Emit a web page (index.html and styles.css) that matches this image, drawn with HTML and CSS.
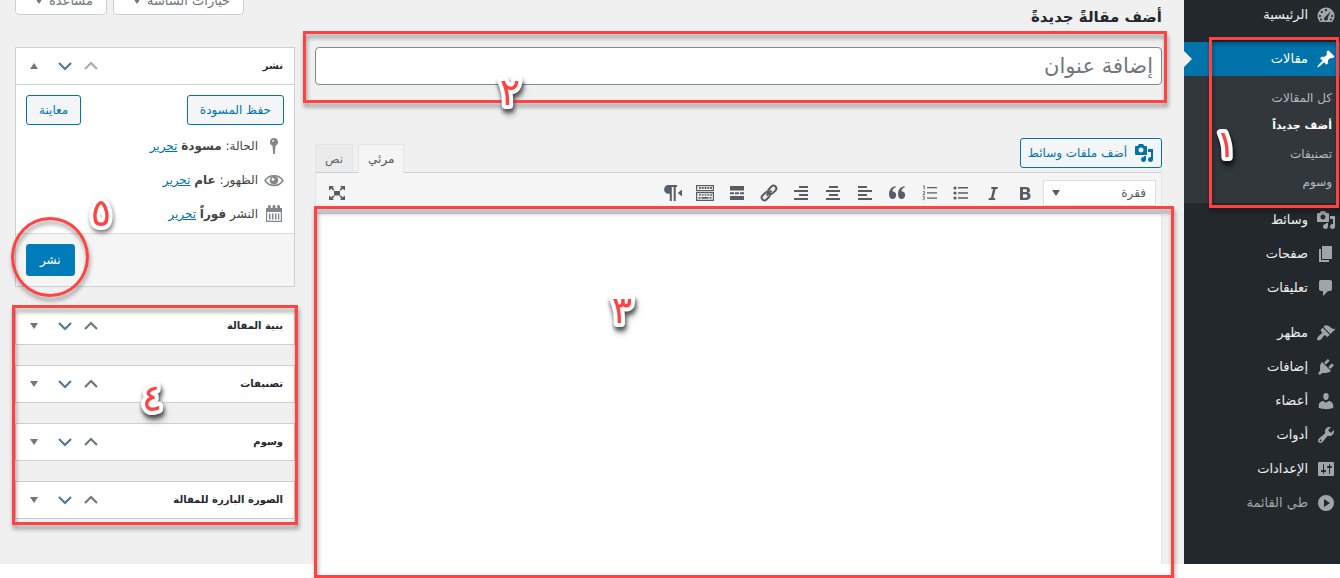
FILE: index.html
```html
<!DOCTYPE html>
<html lang="ar" dir="rtl">
<head>
  <meta charset="UTF-8">
  <meta name="viewport" content="width=device-width,initial-scale=1">
  <title>أضف مقالة جديدة</title>
  <link rel="stylesheet" href="styles.css">
</head>
<body>
  <!-- shared icons -->
  <svg class="sprite" aria-hidden="true">
    <symbol id="i-media" viewBox="0 0 20 20"><path d="M13 11V4c0-.55-.45-1-1-1h-1.67L9 1H5L3.67 3H2c-.55 0-1 .45-1 1v7c0 .55.45 1 1 1h10c.55 0 1-.45 1-1zM7 4.5c1.38 0 2.5 1.12 2.5 2.5S8.38 9.5 7 9.5 4.5 8.38 4.5 7 5.62 4.5 7 4.5zM14 6h5v10.5c0 1.38-1.12 2.5-2.5 2.5S14 17.88 14 16.5s1.12-2.5 2.5-2.5c.17 0 .34.02.5.05V9h-3V6zm-4 8.05V13h2v3.5c0 1.38-1.12 2.5-2.5 2.5S7 17.88 7 16.5 8.12 14 9.5 14c.17 0 .34.02.5.05z"/></symbol>
    <symbol id="i-up" viewBox="0 0 20 20"><path d="M4 13l6-6 6 6" fill="none" stroke="currentColor" stroke-width="2.2"/></symbol>
    <symbol id="i-down" viewBox="0 0 20 20"><path d="M4 7l6 6 6-6" fill="none" stroke="currentColor" stroke-width="2.2"/></symbol>
    <symbol id="i-tri-down" viewBox="0 0 20 20"><path d="M6 7h8l-4 6z"/></symbol>
    <symbol id="i-tri-up" viewBox="0 0 20 20"><path d="M6 13h8l-4-6z"/></symbol>
  </svg>

  <div class="wrap">
    <nav class="admin-menu">
      <a href="#" class="menu-item first">
        <svg viewBox="0 0 20 20"><path d="M3.8 17A8.6 8.6 0 1 1 16.2 17z"/><g fill="#23282d"><circle cx="10" cy="5.2" r="1.1"/><circle cx="5.8" cy="7" r="1.1"/><circle cx="4" cy="11" r="1.1"/><circle cx="16" cy="11" r="1.1"/><circle cx="5" cy="14.6" r="1"/><circle cx="15" cy="14.6" r="1"/><path d="M14.6 6.2l-2.9 6.6a1.9 1.9 0 1 1-2.2-1z"/></g></svg>
        <span>الرئيسية</span>
      </a>
      <div class="menu-group">
        <a href="#" class="menu-item current">
          <svg viewBox="0 0 20 20"><path d="M10.44 3.02l1.82-1.82 6.36 6.35-1.83 1.82c-1.05-.68-2.48-.57-3.41.36l-.75.75c-.92.93-1.04 2.35-.35 3.41l-1.83 1.82-2.41-2.41-2.8 2.79c-.42.42-3.38 2.71-3.8 2.29s1.86-3.39 2.28-3.81l2.79-2.79L4.1 9.36l1.83-1.82c1.05.69 2.48.57 3.4-.36l.75-.75c.93-.92 1.05-2.35.36-3.41z"/></svg>
          <span>مقالات</span>
        </a>
        <ul class="submenu">
          <li><a href="#">كل المقالات</a></li>
          <li><a href="#" class="active">أضف جديداً</a></li>
          <li><a href="#">تصنيفات</a></li>
          <li><a href="#">وسوم</a></li>
        </ul>
        <div class="mark mark-menu"><svg class="num" viewBox="0 0 40 50"><text x="20" y="38">١</text></svg></div>
      </div>
      <a href="#" class="menu-item"><svg><use href="#i-media"/></svg><span>وسائط</span></a>
      <a href="#" class="menu-item"><svg viewBox="0 0 20 20"><path d="M6 15V2h10v13H6zm-1 1h8v2H3V5h2v11z"/></svg><span>صفحات</span></a>
      <a href="#" class="menu-item"><svg viewBox="0 0 20 20"><path d="M5 2h9c1.1 0 2 .9 2 2v7c0 1.1-.9 2-2 2h-2l-5 5v-5H5c-1.1 0-2-.9-2-2V4c0-1.1.9-2 2-2z"/></svg><span>تعليقات</span></a>
      <a href="#" class="menu-item spaced"><svg viewBox="0 0 20 20"><path d="M14.48 11.06L7.41 3.99l1.5-1.5c.5-.56 2.3-.47 3.51.32 1.21.8 1.43 1.28 2.91 2.1 1.18.64 2.45 1.26 4.45.85zm-.71.71L6.7 4.7 4.93 6.47c-.39.39-.39 1.02 0 1.41l1.06 1.06c.39.39.39 1.03 0 1.42-.6.6-1.43 1.11-2.21 1.69-.35.26-.7.53-1.01.84C1.43 14.23.4 16.08 1.4 17.07c.99 1 2.84-.03 4.18-1.36.31-.31.58-.66.85-1.02.57-.78 1.08-1.61 1.69-2.21.39-.39 1.02-.39 1.41 0l1.06 1.06c.39.39 1.02.39 1.41 0z"/></svg><span>مظهر</span></a>
      <a href="#" class="menu-item"><svg viewBox="0 0 20 20"><path d="M13.11 4.36L9.87 7.6 8 5.73l3.24-3.24c.35-.34 1.05-.2 1.56.32.52.51.66 1.21.31 1.55zm-8 1.77l.91-1.12 9.01 9.01-1.19.84c-.71.71-2.63 1.16-3.82 1.16H6.14L4.9 17.26c-.59.59-1.54.59-2.12 0-.59-.58-.59-1.53 0-2.12l1.24-1.24v-3.88c0-1.13.4-3.19 1.09-3.89zm7.26 3.97l3.24-3.24c.34-.35 1.04-.21 1.55.31.52.51.66 1.21.31 1.55l-3.24 3.25z"/></svg><span>إضافات</span></a>
      <a href="#" class="menu-item"><svg viewBox="0 0 20 20"><path d="M10 9.25c-2.27 0-2.73-3.44-2.73-3.44C7 4.02 7.82 2 9.97 2c2.16 0 2.98 2.02 2.71 3.81 0 0-.41 3.44-2.68 3.44zm0 2.57L12.72 10c2.39 0 4.52 2.33 4.52 4.53v2.49s-3.65 1.13-7.24 1.13c-3.65 0-7.24-1.13-7.24-1.13v-2.49c0-2.25 1.94-4.48 4.47-4.48z"/></svg><span>أعضاء</span></a>
      <a href="#" class="menu-item"><svg viewBox="0 0 20 20"><path d="M16.68 9.77c-1.34 1.34-3.3 1.67-4.95.99l-5.41 6.52c-.99.99-2.59.99-3.58 0s-.99-2.59 0-3.57l6.52-5.42c-.68-1.65-.35-3.61.99-4.95 1.28-1.28 3.12-1.62 4.72-1.06l-2.89 2.89 2.82 2.82 2.86-2.87c.53 1.58.18 3.39-1.08 4.65zM3.81 16.21c.4.39 1.04.39 1.43 0 .4-.4.4-1.04 0-1.43-.39-.4-1.03-.4-1.43 0-.39.39-.39 1.03 0 1.43z"/></svg><span>أدوات</span></a>
      <a href="#" class="menu-item"><svg viewBox="0 0 20 20"><path d="M18 16V4c0-.55-.45-1-1-1H3c-.55 0-1 .45-1 1v12c0 .55.45 1 1 1h14c.55 0 1-.45 1-1zM8 11h1c.55 0 1 .45 1 1s-.45 1-1 1H8v1.5c0 .28-.22.5-.5.5s-.5-.22-.5-.5V13H6c-.55 0-1-.45-1-1s.45-1 1-1h1V5.5c0-.28.22-.5.5-.5s.5.22.5.5V11zm5-2h-1c-.55 0-1-.45-1-1s.45-1 1-1h1V5.5c0-.28.22-.5.5-.5s.5.22.5.5V7h1c.55 0 1 .45 1 1s-.45 1-1 1h-1v5.5c0 .28-.22.5-.5.5s-.5-.22-.5-.5V9z"/></svg><span>الإعدادات</span></a>
      <button type="button" class="menu-item collapse"><svg viewBox="0 0 20 20"><path fill-rule="evenodd" d="M10 2a8 8 0 1 0 0 16 8 8 0 0 0 0-16zM8 6l6 4-6 4z"/></svg><span>طي القائمة</span></button>
    </nav>

    <main class="content">
      <header class="page-head">
        <h1>أضف مقالةً جديدةً</h1>
        <div class="screen-links">
          <button type="button">خيارات الشاشة <svg><use href="#i-tri-down"/></svg></button>
          <button type="button">مساعدة <svg><use href="#i-tri-down"/></svg></button>
        </div>
      </header>

      <div class="columns">
        <section class="main-col">
          <div class="title-box">
            <input type="text" class="title-input" aria-label="إضافة عنوان" placeholder="إضافة عنوان">
            <div class="mark mark-title"><svg class="num" viewBox="0 0 40 50"><text x="20" y="38">٢</text></svg></div>
          </div>

          <div class="editor-tools">
            <button type="button" class="btn media-btn"><svg><use href="#i-media"/></svg>أضف ملفات وسائط</button>
            <div class="tabs">
              <button type="button" class="tab on">مرئي</button>
              <button type="button" class="tab">نص</button>
            </div>
          </div>

          <div class="editor">
            <div class="toolbar">
              <div class="format">
                <select aria-label="فقرة"><option>فقرة</option></select>
                <svg><use href="#i-tri-down"/></svg>
              </div>
              <button type="button" title="عريض"><svg viewBox="0 0 20 20"><path fill-rule="evenodd" d="M5 4h5.600c3 0 4.400 1.200 4.400 3.200 0 1.400-.7 2.300-1.900 2.700 1.600.3 2.500 1.400 2.500 3 0 2.600-1.800 4.100-4.900 4.100H5zm3 2.200v2.900h2.200c1.200 0 1.800-.5 1.800-1.500s-.6-1.400-1.800-1.400zm0 5v3.500h2.500c1.300 0 1.900-.6 1.900-1.700 0-1.200-.7-1.800-2-1.800z"/></svg></button>
              <button type="button" title="مائل"><svg viewBox="0 0 20 20"><path d="M8.500 4H15l-.4 2h-2L10.400 15h2l-.4 2H5.500l.4-2h2L10.100 6h-2z"/></svg></button>
              <button type="button" title="قائمة نقطية"><svg viewBox="0 0 20 20"><circle cx="4" cy="5" r="1.600"/><circle cx="4" cy="10" r="1.600"/><circle cx="4" cy="15" r="1.600"/><path d="M7 4h10v1.500H7zM7 9.200h10v1.500H7zM7 14.300h10v1.500H7z"/></svg></button>
              <button type="button" title="قائمة رقمية"><svg viewBox="0 0 20 20"><path d="M8 4h10v1.300H8zM8 9.300h10v1.300H8zM8 14.400h10v1.300H8z"/><path d="M4 3.500l1.200-.8v4M3.800 8.600h1.800v1.500l-1.700 1.500h2M3.700 13.700h1.800l-.8 1.400c1.300 0 1.200 1.900-1 1.500" fill="none" stroke="currentColor" stroke-width=".9"/></svg></button>
              <button type="button" title="اقتباس"><svg viewBox="0 0 20 20"><path d="M9 4.300C6.800 4.800 5.600 6 5.500 8.500 7.600 8.200 9.200 9.800 9.200 12S7.700 16 5.600 16 2 14.300 2 11.300C2 6.800 4.500 3.500 8.400 3.200zM18 4.300c-2.200.5-3.400 1.700-3.500 4.200 2.100-.3 3.700 1.300 3.700 3.500S16.700 16 14.600 16 11 14.300 11 11.300c0-4.500 2.500-7.800 6.400-8.100z"/></svg></button>
              <button type="button" title="محاذاة لليسار"><svg viewBox="0 0 20 20"><path d="M3 3h9v2H3zM3 7h14v2H3zM3 11h9v2H3zM3 15h14v2H3z"/></svg></button>
              <button type="button" title="توسيط"><svg viewBox="0 0 20 20"><path d="M6 3h9v2H6zM3 7h14v2H3zM6 11h9v2H6zM3 15h14v2H3z"/></svg></button>
              <button type="button" title="محاذاة لليمين"><svg viewBox="0 0 20 20"><path d="M8 3h9v2H8zM3 7h14v2H3zM8 11h9v2H8zM3 15h14v2H3z"/></svg></button>
              <button type="button" title="رابط"><svg viewBox="0 0 20 20"><g fill="none" stroke="currentColor" stroke-width="2"><rect x="-4.500" y="-2.800" width="9" height="5.600" rx="2.800" transform="translate(13.300 6.700) rotate(-45)"/><rect x="-4.500" y="-2.800" width="9" height="5.600" rx="2.800" transform="translate(6.700 13.300) rotate(-45)"/><path d="M7.500 12.500l5-5"/></g></svg></button>
              <button type="button" title="اقرأ المزيد"><svg viewBox="0 0 20 20"><path d="M3 3h14v4.500H3zM3 9.200h4v2H3zM8 9.200h4v2H8zM13 9.200h4v2h-4zM3 13h14v4H3z"/></svg></button>
              <button type="button" title="تبديل الشريط"><svg viewBox="0 0 20 20"><g fill="none" stroke="currentColor" stroke-width="1.200"><path d="M1.600 2.600h16.800v5H1.600zM1.600 9.600h16.800v7.800H1.600z"/><path d="M4 5.100h13" stroke-width="2" stroke-dasharray="1.800 1"/><path d="M4 12h13" stroke-width="1.600" stroke-dasharray="1.800 1"/><path d="M3.500 14.900h2M6.500 14.900h7M14.500 14.900h2" stroke-width="1.600"/></g></svg></button>
              <button type="button" title="اتجاه النص"><svg viewBox="0 0 20 20"><path d="M5.500 2H14v2h-1.300v14h-2V4H8.800v14h-2v-7.200H5.500a4.400 4.400 0 0 1 0-8.800zM19 6.500v7L14.800 10z"/></svg></button>
              <button type="button" class="full" title="ملء الشاشة"><svg viewBox="0 0 20 20"><path d="M7 8h6v4.500H7zM2 3h5L5.500 4.500l2 2-1.200 1.200-2-2L2 7.500zM18 3h-5l1.500 1.500-2 2 1.200 1.200 2-2L18 7.500zM2 17h5l-1.500-1.500 2-2-1.200-1.200-2 2L2 12.500zM18 17h-5l1.500-1.500-2-2 1.200-1.200 2 2L18 12.500z"/></svg></button>
            </div>
            <div class="edit-area">
              <textarea aria-label="محتوى المقالة"></textarea>
              <div class="mark mark-editor"><svg class="num" viewBox="0 0 40 50"><text x="20" y="38">٣</text></svg></div>
            </div>
          </div>
        </section>

        <aside class="side-col">
          <div class="postbox">
            <div class="box-head">
              <h2>نشر</h2>
              <button type="button" class="dim" aria-label="تحريك لأعلى"><svg><use href="#i-up"/></svg></button>
              <button type="button" class="down" aria-label="تحريك لأسفل"><svg><use href="#i-down"/></svg></button>
              <button type="button" aria-label="طي"><svg><use href="#i-tri-up"/></svg></button>
            </div>
            <div class="publish-body">
              <div class="publish-btns">
                <button type="button" class="btn">حفظ المسودة</button>
                <button type="button" class="btn">معاينة</button>
              </div>
              <p><svg viewBox="0 0 20 20"><path fill-rule="evenodd" d="M10 2a4 4 0 0 1 1.500 7.700L10.800 18H9.200L8.500 9.700A4 4 0 0 1 10 2zm0 1.800a2.200 2.200 0 0 0-2 2.200h1a1.200 1.200 0 0 1 1-1.200z"/></svg><span>الحالة: <b>مسودة</b> <a href="#">تحرير</a></span></p>
              <p><svg viewBox="0 0 20 20"><path d="M1 10.500C5 4 15 4 19 10.500 15 17 5 17 1 10.500z" fill="none" stroke="currentColor" stroke-width="1.500"/><path fill-rule="evenodd" d="M10 6a4.300 4.300 0 1 1 0 8.600A4.300 4.300 0 0 1 10 6zm-1 1.800a1.500 1.500 0 1 0 0 3 1.500 1.500 0 0 0 0-3z"/></svg><span>الظهور: <b>عام</b> <a href="#">تحرير</a></span></p>
              <p><svg viewBox="0 0 20 20"><path fill-rule="evenodd" d="M2 4h2V2.500a1.400 1.400 0 0 1 2.800 0V4h1.800V2.500a1.400 1.400 0 0 1 2.800 0V4h1.800V2.500a1.400 1.400 0 0 1 2.800 0V4h2v14H2zm1.200 4v8.800h13.600V8z"/><path d="M5 9.500h1.500v6H5zM8 9.500h1.500v6H8zM11 9.500h1.500v6H11zM14 9.500h1.300v6H14z"/></svg><span>النشر <b>فوراً</b> <a href="#">تحرير</a></span></p>
              <svg class="num num-publish" viewBox="0 0 40 50"><text x="20" y="38">٥</text></svg>
            </div>
            <div class="publish-foot">
              <div class="publish-wrap">
                <button type="button" class="btn primary">نشر</button>
                <div class="mark mark-circle"></div>
              </div>
            </div>
          </div>

          <div class="box-list">
            <div class="postbox">
              <div class="box-head">
                <h2>بنية المقالة</h2>
                <button type="button" aria-label="تحريك لأعلى"><svg><use href="#i-up"/></svg></button>
                <button type="button" class="down" aria-label="تحريك لأسفل"><svg><use href="#i-down"/></svg></button>
                <button type="button" aria-label="توسيع"><svg><use href="#i-tri-down"/></svg></button>
              </div>
            </div>
            <div class="postbox">
              <div class="box-head">
                <h2>تصنيفات</h2>
                <button type="button" aria-label="تحريك لأعلى"><svg><use href="#i-up"/></svg></button>
                <button type="button" class="down" aria-label="تحريك لأسفل"><svg><use href="#i-down"/></svg></button>
                <button type="button" aria-label="توسيع"><svg><use href="#i-tri-down"/></svg></button>
              </div>
            </div>
            <div class="postbox">
              <div class="box-head">
                <h2>وسوم</h2>
                <button type="button" aria-label="تحريك لأعلى"><svg><use href="#i-up"/></svg></button>
                <button type="button" class="down" aria-label="تحريك لأسفل"><svg><use href="#i-down"/></svg></button>
                <button type="button" aria-label="توسيع"><svg><use href="#i-tri-down"/></svg></button>
              </div>
            </div>
            <div class="postbox">
              <div class="box-head">
                <h2>الصورة البارزة للمقالة</h2>
                <button type="button" aria-label="تحريك لأعلى"><svg><use href="#i-up"/></svg></button>
                <button type="button" class="down" aria-label="تحريك لأسفل"><svg><use href="#i-down"/></svg></button>
                <button type="button" aria-label="توسيع"><svg><use href="#i-tri-down"/></svg></button>
              </div>
            </div>
            <div class="mark mark-boxes"><svg class="num" viewBox="0 0 40 50"><text x="20" y="38">٤</text></svg></div>
          </div>
        </aside>
      </div>
    </main>
  </div>
</body>
</html>
```
FILE: styles.css
```css
:root {
  --bg: #f0f0f1;
  --menu: #23282d;
  --submenu: #32373c;
  --blue: #0073aa;
  --line: #ccd0d4;
  --red: #ff4343;
}
* { box-sizing: border-box; }
body {
  margin: 0;
  height: 100vh;
  overflow: hidden;
  background: #fff;
  color: #444;
  font-family: "DejaVu Sans", sans-serif;
  font-size: 12px;
  line-height: 20px;
}
.sprite { position: absolute; width: 0; height: 0; }
svg { width: 20px; height: 20px; fill: currentColor; flex: none; display: block; }
button { font: inherit; color: inherit; cursor: pointer; padding: 0; border: 0; background: none; }
a { color: var(--blue); }
h1, h2, p, ul { margin: 0; padding: 0; }

/* the page sits slightly scrolled, hence the negative margin */
.wrap {
  display: flex;
  height: 100vh;
  margin-top: -14px;
  background: var(--bg);
}

/* menu */
.admin-menu {
  width: 156px;
  flex: none;
  background: var(--menu);
  color: #a0a5aa;
  padding-top: 12px;
  position: relative;
  z-index: 2;
}
.menu-item {
  display: flex;
  align-items: center;
  gap: 8px;
  width: 100%;
  height: 34px;
  padding: 0 4px;
  color: #a0a5aa;
  text-decoration: none;
  font-size: 13px;
}
.menu-item span { color: #eee; }
.menu-item.first { margin-bottom: 10px; }
.menu-item.spaced { margin-top: 11px; }
.menu-item.collapse span { color: #a0a5aa; }
.menu-group { position: relative; }
.menu-item.current {
  position: relative;
  background: var(--blue);
  color: #fff;
}
.menu-item.current span { color: #fff; }
.menu-item.current::after {
  content: "";
  position: absolute;
  left: 0;
  top: 9px;
  border: 8px solid transparent;
  border-left-color: var(--bg);
  border-right-width: 0;
}
.submenu {
  list-style: none;
  background: var(--submenu);
  padding: 8px 8px 7px;
}
.submenu a {
  display: block;
  padding: 4px 0;
  color: #b4b9be;
  text-decoration: none;
  font-size: 12px;
}
.submenu .active { color: #fff; font-weight: bold; font-size: 11px; }

/* page head */
.content { flex: 1; min-width: 0; padding: 0 22px 0 15px; display: flex; flex-direction: column; }
.page-head {
  display: flex;
  justify-content: space-between;
  align-items: flex-start;
  height: 61px;
  flex: none;
}
.page-head h1 {
  color: #23282d;
  font-size: 15px;
  line-height: 24px;
  padding-top: 19px;
}
.screen-links { display: flex; gap: 6px; }
.screen-links button {
  display: flex;
  align-items: center;
  height: 29px;
  padding: 0 13px;
  border: 1px solid var(--line);
  border-radius: 0 0 4px 4px;
  background: #fff;
  color: #72777c;
  font-size: 13px;
}
.columns { display: flex; gap: 20px; flex: 1; }
.main-col { flex: 1; min-width: 0; display: flex; flex-direction: column; }
.side-col { width: 280px; flex: none; }

/* title */
.title-box { position: relative; }
.title-input {
  display: block;
  width: 100%;
  height: 38px;
  padding: 0 8px;
  border: 1px solid #7e8993;
  border-radius: 4px;
  background: #fff;
  font: inherit;
  font-size: 21px;
}
.title-input::placeholder { color: #72777c; opacity: 1; }

/* buttons */
.btn {
  display: inline-flex;
  align-items: center;
  justify-content: center;
  height: 30px;
  padding: 0 12px;
  border: 1px solid var(--blue);
  border-radius: 3px;
  background: #f3f5f6;
  color: var(--blue);
}
.btn.primary { height: 32px; padding: 0 13px; background: #007cba; border-color: #007cba; color: #fff; }
.btn.media-btn { gap: 7px; padding: 0 7px; }

/* editor */
.editor-tools {
  display: flex;
  justify-content: space-between;
  align-items: flex-start;
  margin-top: 53px;
  margin-bottom: -1px;
  position: relative;
  z-index: 1;
}
.tabs { display: flex; gap: 5px; padding-top: 6px; }
.tab {
  height: 29px;
  padding: 0 9px;
  border: 1px solid #e5e5e5;
  border-bottom-color: var(--line);
  background: #ebebeb;
  color: #666;
}
.tab.on { background: #f5f5f5; border-bottom-color: #f5f5f5; color: #555; }
.editor {
  flex: 1;
  display: flex;
  flex-direction: column;
  border: 1px solid #e5e5e5;
  border-top-color: var(--line);
  border-bottom: 0;
}
.toolbar {
  display: flex;
  align-items: center;
  gap: 4px;
  padding: 6px 5px;
  background: #f5f5f5;
  border-bottom: 1px solid #ddd;
  color: #555d66;
}
.toolbar button { width: 28px; height: 28px; display: grid; place-items: center; }
.toolbar .full { margin-inline-start: auto; margin-inline-end: 2px; }
.format { position: relative; width: 113px; }
.format select {
  width: 100%;
  height: 26px;
  padding: 0 9px;
  border: 1px solid #ddd;
  background: #fff;
  color: #555d66;
  font: inherit;
  appearance: none;
}
.format svg { position: absolute; left: 3px; top: 3px; pointer-events: none; }
.edit-area { flex: 1; position: relative; background: #fff; }
.edit-area textarea {
  display: block;
  width: 100%;
  height: 100%;
  border: 0;
  resize: none;
  background: #fff;
}

/* side boxes */
.postbox { background: #fff; border: 1px solid var(--line); }
.box-head {
  display: flex;
  align-items: center;
  height: 36px;
  padding: 0 11px 0 5px;
  color: #72777c;
}
.box-head h2 { flex: 1; color: #23282d; font-size: 10px; }
.box-head button { width: 26px; height: 26px; display: grid; place-items: center; }
.box-head .dim { opacity: .6; }
.box-head .down { margin-inline-end: 5px; color: #50799a; }
.publish-body {
  position: relative;
  border-top: 1px solid var(--line);
  padding: 10px 10px 2px;
}
.publish-btns { display: flex; justify-content: space-between; margin-bottom: 4px; }
.publish-body p { display: flex; align-items: center; gap: 6px; height: 34px; }
.publish-body p svg { color: #82878c; }
.publish-foot {
  display: flex;
  justify-content: flex-end;
  padding: 10px;
  background: #f5f5f5;
  border-top: 1px solid #ddd;
}
.publish-wrap { position: relative; }
.box-list {
  position: relative;
  display: flex;
  flex-direction: column;
  gap: 20px;
  margin-top: 20px;
}

/* numbered red marks drawn over the page */
.mark {
  position: absolute;
  z-index: 3;
  border: 3px solid var(--red);
  pointer-events: none;
  filter: drop-shadow(1px 4px 2px rgba(0,0,0,.4));
}
.mark-menu { inset: -5px 1px -5px 25px; }
.mark-title { inset: -16px -5px -18px -12px; }
.mark-editor { inset: -8px -13px -14px -2px; }
.mark-boxes { inset: -2px -3px -6px; }
.mark-circle { inset: -27px -14px -21px -15px; border-radius: 50%; }
.num {
  position: absolute;
  width: 40px;
  height: 50px;
  overflow: visible;
  fill: var(--red);
  stroke: #fff;
  stroke-width: 8px;
  stroke-linejoin: round;
  paint-order: stroke;
  font-size: 38px;
  text-anchor: middle;
  filter: drop-shadow(1px 3px 2px rgba(0,0,0,.5));
}
.mark-menu .num { left: -6px; top: 79px; }
.mark-title .num { left: 184px; top: 33px; }
.mark-editor .num { left: 285px; top: 76px; }
.mark-boxes .num { left: 117px; top: 65px; }
.num-publish { left: 65px; top: 103px; z-index: 3; }
```
